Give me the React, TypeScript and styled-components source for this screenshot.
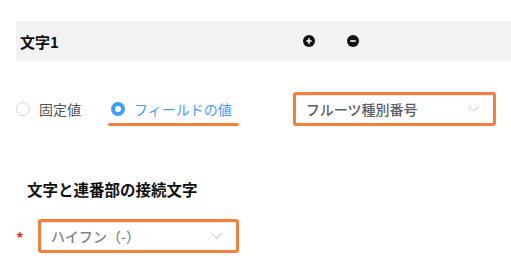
import React, { ReactElement, useState } from 'react';
import styled, { createGlobalStyle } from 'styled-components';

const GlobalStyle = createGlobalStyle`
  body {
    margin: 0;
    background: #fff;
    font-family: "Noto Sans CJK JP", "Noto Sans", sans-serif;
  }
`;

const Page = styled.div`
  width: 511px;
  height: 278px;
  overflow: hidden;
  padding: 21px 0 0 16px;
  box-sizing: border-box;
`;

const Header = styled.div`
  height: 40px;
  background: #f2f2f4;
  display: flex;
  align-items: center;
  padding-left: 4px;
`;

const HeaderTitle = styled.div`
  width: 283px;
  font-size: 15px;
  font-weight: 700;
  color: #111;
`;

const IconButtons = styled.div`
  display: flex;
  align-items: center;
  gap: 32px;
`;

const RoundIcon = styled.svg`
  width: 12px;
  height: 12px;
  display: block;
`;

const RadioRow = styled.div`
  display: flex;
  align-items: center;
  margin-top: 31px;
  height: 34px;
`;

const RadioLabel = styled.label<{ $checked: boolean; $marked?: boolean }>`
  position: relative;
  display: flex;
  align-items: center;
  gap: 9px;
  font-size: 14px;
  color: ${p => (p.$checked ? '#4a9bfa' : '#555')};
  margin-right: ${p => (p.$marked ? '61px' : '30px')};
  cursor: pointer;
  ${p =>
    p.$marked &&
    `&::after {
      content: "";
      position: absolute;
      left: -3px;
      right: -7px;
      bottom: -7px;
      height: 3px;
      border-radius: 2px;
      background: #f5803e;
    }`}
`;

const RadioDot = styled.span<{ $checked: boolean }>`
  width: 14px;
  height: 14px;
  border-radius: 50%;
  box-sizing: border-box;
  border: ${p => (p.$checked ? '4px solid #409eff' : '1px solid #d5d9e0')};
  background: #fff;
`;

const SelectBox = styled.div<{ $width: number; $muted?: boolean }>`
  width: ${p => p.$width}px;
  height: 34px;
  box-sizing: border-box;
  border: 3px solid #f5803e;
  border-radius: 3px;
  box-shadow: inset 0 1px 0 #e4e7ed;
  display: flex;
  align-items: center;
  justify-content: space-between;
  padding: 0 14px 0 10px;
  font-size: 14px;
  font-weight: 500;
  color: ${p => (p.$muted ? '#80848c' : '#5b5e66')};
`;

const Chevron = styled.svg`
  width: 11px;
  height: 6px;
  display: block;
`;

const SectionTitle = styled.div`
  margin: 52px 0 0 11px;
  font-size: 15.5px;
  font-weight: 700;
  color: #111;
  line-height: 22px;
`;

const FieldRow = styled.div`
  display: flex;
  align-items: center;
  margin-top: 19px;
`;

const Required = styled.span`
  width: 22px;
  color: #f02b2b;
  font-size: 15px;
  font-weight: 700;
  padding-top: 3px;
`;

function ArrowDown(): ReactElement {
  return (
    <Chevron viewBox="0 0 11 6">
      <polyline points="0.5,0.5 5.5,5 10.5,0.5" fill="none" stroke="#c0c4cc" strokeWidth="1" />
    </Chevron>
  );
}

export default function App(): ReactElement {
  const [mode, setMode] = useState<'fixed' | 'field'>('field');

  return (
    <Page>
      <GlobalStyle />
      <Header>
        <HeaderTitle>文字1</HeaderTitle>
        <IconButtons>
          <RoundIcon viewBox="0 0 12 12">
            <circle cx="6" cy="6" r="6" fill="#111" />
            <path d="M3.3 6h5.4M6 3.3v5.4" stroke="#fff" strokeWidth="1.6" />
          </RoundIcon>
          <RoundIcon viewBox="0 0 12 12">
            <circle cx="6" cy="6" r="6" fill="#111" />
            <path d="M3.3 6h5.4" stroke="#fff" strokeWidth="1.6" />
          </RoundIcon>
        </IconButtons>
      </Header>

      <RadioRow>
        <RadioLabel $checked={mode === 'fixed'} onClick={() => setMode('fixed')}>
          <RadioDot $checked={mode === 'fixed'} />
          固定値
        </RadioLabel>
        <RadioLabel $checked={mode === 'field'} $marked onClick={() => setMode('field')}>
          <RadioDot $checked={mode === 'field'} />
          フィールドの値
        </RadioLabel>
        <SelectBox $width={203}>
          フルーツ種別番号
          <ArrowDown />
        </SelectBox>
      </RadioRow>

      <SectionTitle>文字と連番部の接続文字</SectionTitle>

      <FieldRow>
        <Required>*</Required>
        <SelectBox $width={201} $muted>
          ハイフン（-）
          <ArrowDown />
        </SelectBox>
      </FieldRow>
    </Page>
  );
}
